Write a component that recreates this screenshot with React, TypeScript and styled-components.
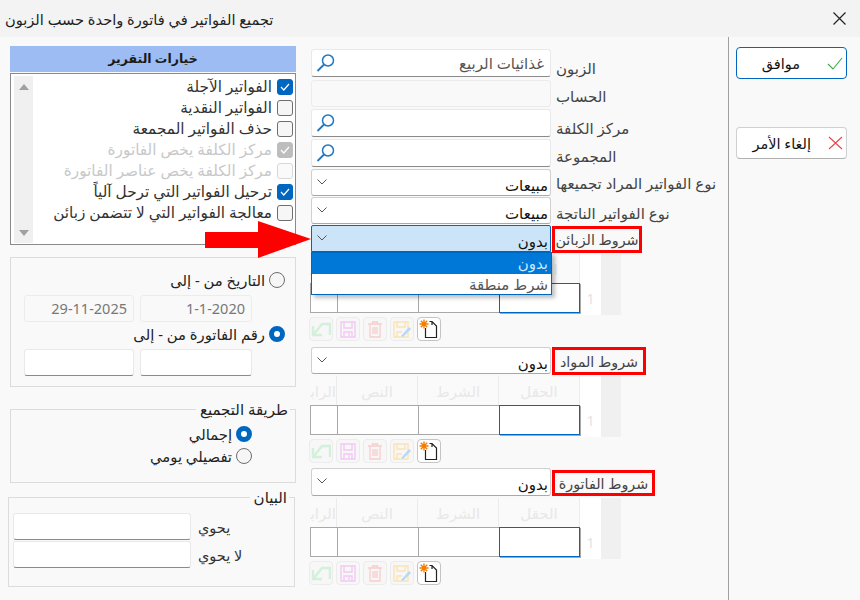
import React from "react";
import styled, { createGlobalStyle } from "styled-components";

const GlobalStyle = createGlobalStyle`
  html, body { margin: 0; padding: 0; background: #f9f9f9; }
  body { font-family: "Noto Sans", "DejaVu Sans", sans-serif; color: #222; }
  * { box-sizing: border-box; }
`;

const Window = styled.div`
  width: 860px;
  height: 600px;
  overflow: hidden;
  display: flex;
  flex-direction: column;
  background: #f9f9f9;
`;

const TitleBar = styled.header`
  height: 37px;
  flex: none;
  display: flex;
  align-items: center;
  justify-content: space-between;
  padding: 0 14px 0 5px;
  background: #f3f3f3;
  font-size: 14.6px;
  color: #222;
`;

const Body = styled.div`
  flex: 1;
  display: flex;
`;

const LeftColumn = styled.div`
  width: 311px;
  flex: none;
  padding: 9px 15px 0 10px;
  display: flex;
  flex-direction: column;
`;

const MiddleColumn = styled.div`
  width: 417px;
  flex: none;
  padding: 12px 0 0 0;
  display: flex;
  flex-direction: column;
`;

const RightColumn = styled.div`
  flex: 1;
  border-left: 1px solid #a0a0a0;
  padding: 10px 12px 0 7px;
  display: flex;
  flex-direction: column;
  gap: 48px;
`;

const ReportHeader = styled.div`
  height: 26px;
  background: #9dbcf3;
  text-align: center;
  font-size: 12.5px;
  font-weight: 700;
  line-height: 26px;
  color: #1a1a1a;
`;

const ReportList = styled.div`
  margin-top: 1px;
  height: 172px;
  border: 1px solid #8a8a8a;
  background: #fff;
  display: flex;
  justify-content: space-between;
  padding: 2px 2px 0 3px;
`;

const ScrollTrack = styled.div`
  width: 19px;
  height: 167px;
  background: #f0f0f0;
  display: flex;
  flex-direction: column;
  justify-content: space-between;
  align-items: center;
  padding: 8px 0 7px;
`;

const ScrollArrow = styled.div<{ $down?: boolean }>`
  width: 0;
  height: 0;
  border-left: 5px solid transparent;
  border-right: 5px solid transparent;
  ${(p) =>
    p.$down
      ? "border-top: 6px solid #a0a0a0;"
      : "border-bottom: 6px solid #a0a0a0;"}
`;

const OptionList = styled.div`
  display: flex;
  flex-direction: column;
`;

const OptionRow = styled.div<{ $muted?: boolean }>`
  height: 21px;
  display: flex;
  justify-content: flex-end;
  align-items: center;
  gap: 5px;
  font-size: 15.3px;
  line-height: 19px;
  color: ${(p) => (p.$muted ? "#c8c8c8" : "#333")};
`;

const RtlText = styled.span`
  direction: rtl;
  white-space: nowrap;
`;

const CheckBox = styled.span<{ $on?: boolean; $muted?: boolean }>`
  width: 16px;
  height: 16px;
  flex: none;
  border-radius: 3px;
  display: flex;
  align-items: center;
  justify-content: center;
  border: 1px solid
    ${(p) => (p.$muted ? (p.$on ? "#bdbdbd" : "#d8d8d8") : p.$on ? "#0067c0" : "#6e6e6e")};
  background: ${(p) => (p.$on ? (p.$muted ? "#bdbdbd" : "#0067c0") : p.$muted ? "#fafafa" : "#f6f6f6")};
`;

const Group = styled.fieldset<{ $top: number; $height: number; $left?: number; $right?: number }>`
  margin: ${(p) => p.$top}px ${(p) => p.$right ?? 0}px 0 ${(p) => p.$left ?? 0}px;
  height: ${(p) => p.$height}px;
  padding: 0;
  border: 1px solid #dcdcdc;
  min-width: 0;
  direction: rtl;
`;

const GroupTitle = styled.legend`
  margin-right: 5px;
  padding: 0 2px 0 4px;
  font-size: 15px;
  line-height: 17px;
  color: #222;
`;

const RadioRow = styled.div<{ $right: number; $top?: number }>`
  display: flex;
  align-items: center;
  gap: 4px;
  height: 22px;
  margin: ${(p) => p.$top ?? 0}px ${(p) => p.$right}px 0 0;
  font-size: 14.8px;
  color: #222;
`;

const Radio = styled.span<{ $on?: boolean }>`
  width: 16px;
  height: 16px;
  flex: none;
  border-radius: 50%;
  ${(p) =>
    p.$on
      ? "border: 5px solid #0067c0; background: #fff;"
      : "border: 1px solid #6e6e6e; background: #f6f6f6;"}
`;

const InputPair = styled.div`
  display: flex;
  gap: 6px;
  margin: 4px 43px 0 0;
`;

const PlainInput = styled.div<{ $width: number; $disabled?: boolean }>`
  width: ${(p) => p.$width}px;
  height: 27px;
  flex: none;
  border-radius: 3px;
  border: 1px solid ${(p) => (p.$disabled ? "#ececec" : "#e9e9e9")};
  border-bottom: 1px solid ${(p) => (p.$disabled ? "#ececec" : "#8a8a8a")};
  background: ${(p) => (p.$disabled ? "#f9f9f9" : "#fff")};
  font-size: 14.5px;
  line-height: 25px;
  direction: ltr;
  text-align: right;
  padding-right: 6px;
  color: #777;
`;

const NoteRow = styled.div<{ $top: number }>`
  display: flex;
  align-items: center;
  gap: 7px;
  margin: ${(p) => p.$top}px 0 0 4px;
  direction: ltr;
`;

const NoteLabel = styled.span`
  direction: rtl;
  text-align: left;
  font-size: 14.5px;
  color: #333;
  white-space: nowrap;
`;

const FieldRow = styled.div<{ $height: number; $gap?: number }>`
  display: flex;
  height: ${(p) => p.$height}px;
  margin-top: ${(p) => p.$gap ?? 0}px;
`;

const FieldLabel = styled.div<{ $drop?: number }>`
  direction: rtl;
  text-align: left;
  white-space: nowrap;
  font-size: 15px;
  color: #444;
  margin: 0 0 ${(p) => -(p.$drop ?? 0)}px 5px;
  align-self: flex-end;
  line-height: 22px;
`;

const BoxedLabel = styled.div<{ $width: number; $top: number; $height: number }>`
  direction: rtl;
  white-space: nowrap;
  font-size: 14.3px;
  color: #444;
  width: ${(p) => p.$width}px;
  height: ${(p) => p.$height}px;
  margin: ${(p) => p.$top}px 0 0 1px;
  border: 3px solid #f00;
  display: flex;
  align-items: center;
  justify-content: center;
`;

const TextBox = styled.div<{ $disabled?: boolean }>`
  width: 240px;
  height: 100%;
  flex: none;
  border-radius: 3px;
  border: 1px solid ${(p) => (p.$disabled ? "#ececec" : "#e9e9e9")};
  border-bottom: 1px solid ${(p) => (p.$disabled ? "#ececec" : "#8a8a8a")};
  background: ${(p) => (p.$disabled ? "#f9f9f9" : "#fff")};
  display: flex;
  align-items: center;
  justify-content: space-between;
  padding: 0 6px 0 3px;
  font-size: 15px;
  color: #555;
`;

const SelectWrap = styled.div`
  position: relative;
  width: 240px;
  height: 100%;
  flex: none;
`;

const SelectBox = styled.div<{ $open?: boolean }>`
  height: 100%;
  border-radius: ${(p) => (p.$open ? "2px 2px 0 0" : "3px")};
  border: 1px solid ${(p) => (p.$open ? "#0067c0" : "#d0d0d0")};
  border-bottom-color: ${(p) => (p.$open ? "#0067c0" : "#a8a8a8")};
  background: ${(p) => (p.$open ? "#cce4f7" : "#fff")};
  display: flex;
  justify-content: space-between;
  padding: 0 2px 0 5px;
  font-size: 15px;
  line-height: 30px;
  color: #111;
`;

const Chevron = styled.svg`
  width: 10px;
  height: 6px;
  margin-top: 9px;
  flex: none;
`;

const DropList = styled.div`
  position: absolute;
  top: 100%;
  left: 0;
  width: 241px;
  height: 43px;
  border: 1px solid #0067c0;
  background: #fff;
  box-shadow: 3px 3px 4px rgba(0, 0, 0, 0.25);
  z-index: 3;
`;

const DropItem = styled.div<{ $active?: boolean }>`
  height: ${(p) => (p.$active ? 21 : 20)}px;
  direction: rtl;
  padding-right: 3px;
  font-size: 15px;
  line-height: 21px;
  background: ${(p) => (p.$active ? "#0078d7" : "#fff")};
  color: ${(p) => (p.$active ? "#cfe6fa" : "#555")};
`;

const RedArrow = styled.svg`
  position: absolute;
  right: 100%;
  top: -4px;
  width: 106px;
  height: 37px;
  z-index: 4;
`;

const ConditionGrid = styled.div`
  display: grid;
  grid-template-columns: 27px 81px 81px 81px 21px 20px;
  grid-template-rows: 29px 30px 2px;
  width: 311px;
  margin: 2px 0 0 -1px;
  background: #fafafa;
`;

const HeaderCell = styled.div<{ $clip?: boolean }>`
  direction: rtl;
  overflow: hidden;
  white-space: nowrap;
  text-align: ${(p) => (p.$clip ? "right" : "center")};
  font-size: 15px;
  line-height: 30px;
  color: #e8e8e8;
  border-right: 1px solid #ececec;
`;

const DataCell = styled.div<{ $active?: boolean }>`
  background: #fff;
  border-top: 1px solid ${(p) => (p.$active ? "#0067c0" : "#a8a8a8")};
  border-bottom: 1px solid ${(p) => (p.$active ? "#0067c0" : "#a8a8a8")};
  border-left: 1px solid ${(p) => (p.$active ? "#0067c0" : "#a8a8a8")};
  ${(p) => p.$active && "border-right: 1px solid #0067c0; box-shadow: 1px 1px 0 #a8a8a8;"}
`;

const IndexCell = styled.div`
  grid-row: 1 / span 3;
  grid-column: 5;
  background: #fff;
  display: flex;
  align-items: flex-end;
  justify-content: center;
  padding-bottom: 7px;
  font-size: 14px;
  color: #e2e2e2;
`;

const GutterCell = styled.div`
  grid-row: 1 / span 3;
  grid-column: 6;
  background: #f0f0f0;
`;

const GridToolbar = styled.div`
  display: flex;
  gap: 3px;
  height: 24px;
  margin: 2px 0 0 -2px;
`;

const ToolButton = styled.div<{ $enabled?: boolean }>`
  width: 24px;
  height: 24px;
  border-radius: 4px;
  border: 1px solid ${(p) => (p.$enabled ? "#c4c4c4" : "#ececec")};
  background: ${(p) => (p.$enabled ? "#fff" : "#f7f7f7")};
  display: flex;
  align-items: center;
  justify-content: center;
`;

const ActionButton = styled.div<{ $primary?: boolean; $pad: number }>`
  width: 111px;
  height: 32px;
  border-radius: 4px;
  border: 1px solid ${(p) => (p.$primary ? "#0067c0" : "#d0d0d0")};
  border-bottom-color: ${(p) => (p.$primary ? "#0067c0" : "#b0b0b0")};
  background: #fff;
  display: flex;
  align-items: center;
  justify-content: flex-end;
  gap: ${(p) => p.$pad}px;
  padding-right: 3px;
  font-size: 14.5px;
  color: #111;
`;

const SearchIcon = () => (
  <svg width="22" height="22" viewBox="0 0 22 22" fill="none" stroke="#1f78c1" strokeWidth="1.5">
    <circle cx="13" cy="8.5" r="5.5" />
    <path d="M9 12.5 L2.5 19" strokeWidth="1.8" />
  </svg>
);

const ChevronIcon = () => (
  <Chevron viewBox="0 0 10 6" fill="none" stroke="#555" strokeWidth="1">
    <path d="M0.5 0.5 L5 5 L9.5 0.5" />
  </Chevron>
);

const BoxTick = () => (
  <svg width="10" height="8" viewBox="0 0 10 8" fill="none" stroke="#fff" strokeWidth="1.2">
    <path d="M1 4 L3.8 7 L9 1" />
  </svg>
);

const UndoIcon = () => (
  <svg width="20" height="16" viewBox="0 0 20 16" fill="none" stroke="#d2f0da" strokeWidth="2.4">
    <path d="M19 14 V3 H11 L3 13 M2 5 V14 H11" />
  </svg>
);

const SaveIcon = () => (
  <svg width="16" height="17" viewBox="0 0 16 17" fill="none" stroke="#f3c9f3" strokeWidth="1.4">
    <path d="M1 1 H15 V16 H1 Z M4 1 V7 H12 V1 M4 16 V11 H12 V16 M9 12 V15" />
  </svg>
);

const TrashIcon = () => (
  <svg width="14" height="17" viewBox="0 0 14 17" fill="none" stroke="#f9cdcd" strokeWidth="1.3">
    <path d="M0 3 H14 M4.5 3 V1 H9.5 V3 M2 3 V16 H12 V3 M5 6 V13 M7 6 V13 M9 6 V13" />
  </svg>
);

const EditIcon = () => (
  <svg width="18" height="17" viewBox="0 0 18 17" fill="none">
    <path d="M1 1 H15 V16 H1 Z M4 1 V6 H12 V1 M4 16 V11 H9" stroke="#fbe3b5" strokeWidth="1.4" />
    <path d="M8 15 L16 6 L18 8 L10 16 Z" fill="#b9d8f2" />
  </svg>
);

const NewIcon = () => (
  <svg width="20" height="20" viewBox="0 0 20 20" fill="none">
    <path d="M6.5 9 V18.5 H17.5 V7 L13 2.5 H10.5 M13 2.5 L13 6" stroke="#222" strokeWidth="1.2" />
    <path d="M5 0.5 V9.5 M0.5 5 H9.5 M1.8 1.8 L8.2 8.2 M8.2 1.8 L1.8 8.2" stroke="#f07c00" strokeWidth="1.4" />
  </svg>
);

const options = [
  { text: "الفواتير الآجلة", on: true },
  { text: "الفواتير النقدية" },
  { text: "حذف الفواتير المجمعة" },
  { text: "مركز الكلفة يخص الفاتورة", on: true, muted: true },
  { text: "مركز الكلفة يخص عناصر الفاتورة", muted: true },
  { text: "ترحيل الفواتير التي ترحل آلياً", on: true },
  { text: "معالجة الفواتير التي لا تتضمن زبائن" },
];

const ConditionTable = () => (
  <>
    <ConditionGrid>
      <HeaderCell $clip>الرابط</HeaderCell>
      <HeaderCell>النص</HeaderCell>
      <HeaderCell>الشرط</HeaderCell>
      <HeaderCell>الحقل</HeaderCell>
      <IndexCell>1</IndexCell>
      <GutterCell />
      <DataCell />
      <DataCell />
      <DataCell />
      <DataCell $active />
    </ConditionGrid>
    <GridToolbar>
      <ToolButton><UndoIcon /></ToolButton>
      <ToolButton><SaveIcon /></ToolButton>
      <ToolButton><TrashIcon /></ToolButton>
      <ToolButton><EditIcon /></ToolButton>
      <ToolButton $enabled><NewIcon /></ToolButton>
    </GridToolbar>
  </>
);

export default function App() {
  return (
    <Window>
      <GlobalStyle />
      <TitleBar>
        <RtlText>تجميع الفواتير في فاتورة واحدة حسب الزبون</RtlText>
        <svg width="13" height="13" viewBox="0 0 13 13" stroke="#222" strokeWidth="1.2">
          <path d="M0.5 0.5 L12.5 12.5 M12.5 0.5 L0.5 12.5" />
        </svg>
      </TitleBar>
      <Body>
        <LeftColumn>
          <ReportHeader>خيارات التقرير</ReportHeader>
          <ReportList>
            <ScrollTrack>
              <ScrollArrow />
              <ScrollArrow $down />
            </ScrollTrack>
            <OptionList>
              {options.map((o) => (
                <OptionRow key={o.text} $muted={o.muted}>
                  <RtlText>{o.text}</RtlText>
                  <CheckBox $on={o.on} $muted={o.muted}>{o.on && <BoxTick />}</CheckBox>
                </OptionRow>
              ))}
            </OptionList>
          </ReportList>

          <Group $top={12} $height={130}>
            <RadioRow $right={10} $top={11}><Radio />التاريخ من - إلى</RadioRow>
            <InputPair>
              <PlainInput $width={112} $disabled>1-1-2020</PlainInput>
              <PlainInput $width={110} $disabled>29-11-2025</PlainInput>
            </InputPair>
            <RadioRow $right={10} $top={1}><Radio $on />رقم الفاتورة من - إلى</RadioRow>
            <InputPair>
              <PlainInput $width={112} />
              <PlainInput $width={110} />
            </InputPair>
          </Group>

          <Group $top={14} $height={82}>
            <GroupTitle>طريقة التجميع</GroupTitle>
            <RadioRow $right={43} $top={5}><Radio $on />إجمالي</RadioRow>
            <RadioRow $right={43}><Radio />تفصيلي يومي</RadioRow>
          </Group>

          <Group $top={6} $height={98} $left={-2} $right={1}>
            <GroupTitle>البيان</GroupTitle>
            <NoteRow $top={7}>
              <PlainInput $width={178} />
              <NoteLabel>يحوي</NoteLabel>
            </NoteRow>
            <NoteRow $top={1}>
              <PlainInput $width={178} />
              <NoteLabel>لا يحوي</NoteLabel>
            </NoteRow>
          </Group>
        </LeftColumn>

        <MiddleColumn>
          <FieldRow $height={28}>
            <TextBox><SearchIcon /><RtlText>غذائيات الربيع</RtlText></TextBox>
            <FieldLabel $drop={2}>الزبون</FieldLabel>
          </FieldRow>
          <FieldRow $height={27} $gap={3}>
            <TextBox $disabled />
            <FieldLabel>الحساب</FieldLabel>
          </FieldRow>
          <FieldRow $height={28} $gap={2}>
            <TextBox><SearchIcon /></TextBox>
            <FieldLabel $drop={2}>مركز الكلفة</FieldLabel>
          </FieldRow>
          <FieldRow $height={28} $gap={2}>
            <TextBox><SearchIcon /></TextBox>
            <FieldLabel>المجموعة</FieldLabel>
          </FieldRow>
          <FieldRow $height={27} $gap={2}>
            <SelectWrap>
              <SelectBox><ChevronIcon /><RtlText>مبيعات</RtlText></SelectBox>
            </SelectWrap>
            <FieldLabel $drop={-2}>نوع الفواتير المراد تجميعها</FieldLabel>
          </FieldRow>
          <FieldRow $height={27} $gap={1}>
            <SelectWrap>
              <SelectBox><ChevronIcon /><RtlText>مبيعات</RtlText></SelectBox>
            </SelectWrap>
            <FieldLabel>نوع الفواتير الناتجة</FieldLabel>
          </FieldRow>

          <FieldRow $height={27} $gap={1}>
            <SelectWrap>
              <RedArrow viewBox="0 0 106 37">
                <path d="M0 11 H53 V0 L106 18 L53 37 V27 H0 Z" fill="#f00" />
              </RedArrow>
              <SelectBox $open><ChevronIcon /><RtlText>بدون</RtlText></SelectBox>
              <DropList>
                <DropItem $active>بدون</DropItem>
                <DropItem>شرط منطقة</DropItem>
              </DropList>
            </SelectWrap>
            <BoxedLabel $width={90} $top={1} $height={27}>شروط الزبائن</BoxedLabel>
          </FieldRow>
          <ConditionTable />

          <FieldRow $height={27} $gap={6}>
            <SelectWrap>
              <SelectBox><ChevronIcon /><RtlText>بدون</RtlText></SelectBox>
            </SelectWrap>
            <BoxedLabel $width={94} $top={0} $height={28}>شروط المواد</BoxedLabel>
          </FieldRow>
          <ConditionTable />

          <FieldRow $height={28} $gap={5}>
            <SelectWrap>
              <SelectBox><ChevronIcon /><RtlText>بدون</RtlText></SelectBox>
            </SelectWrap>
            <BoxedLabel $width={103} $top={2} $height={26}>شروط الفاتورة</BoxedLabel>
          </FieldRow>
          <ConditionTable />
        </MiddleColumn>

        <RightColumn>
          <ActionButton $primary $pad={27}>
            <RtlText>موافق</RtlText>
            <svg width="16" height="13" viewBox="0 0 16 13" fill="none" stroke="#3fa652" strokeWidth="1.1">
              <path d="M1 7 L6 12 L15 1" />
            </svg>
          </ActionButton>
          <ActionButton $pad={17}>
            <RtlText>إلغاء الأمر</RtlText>
            <svg width="15" height="14" viewBox="0 0 15 14" fill="none" stroke="#e8434a" strokeWidth="1.1">
              <path d="M1 1 L14 13 M14 1 L1 13" />
            </svg>
          </ActionButton>
        </RightColumn>
      </Body>
    </Window>
  );
}
